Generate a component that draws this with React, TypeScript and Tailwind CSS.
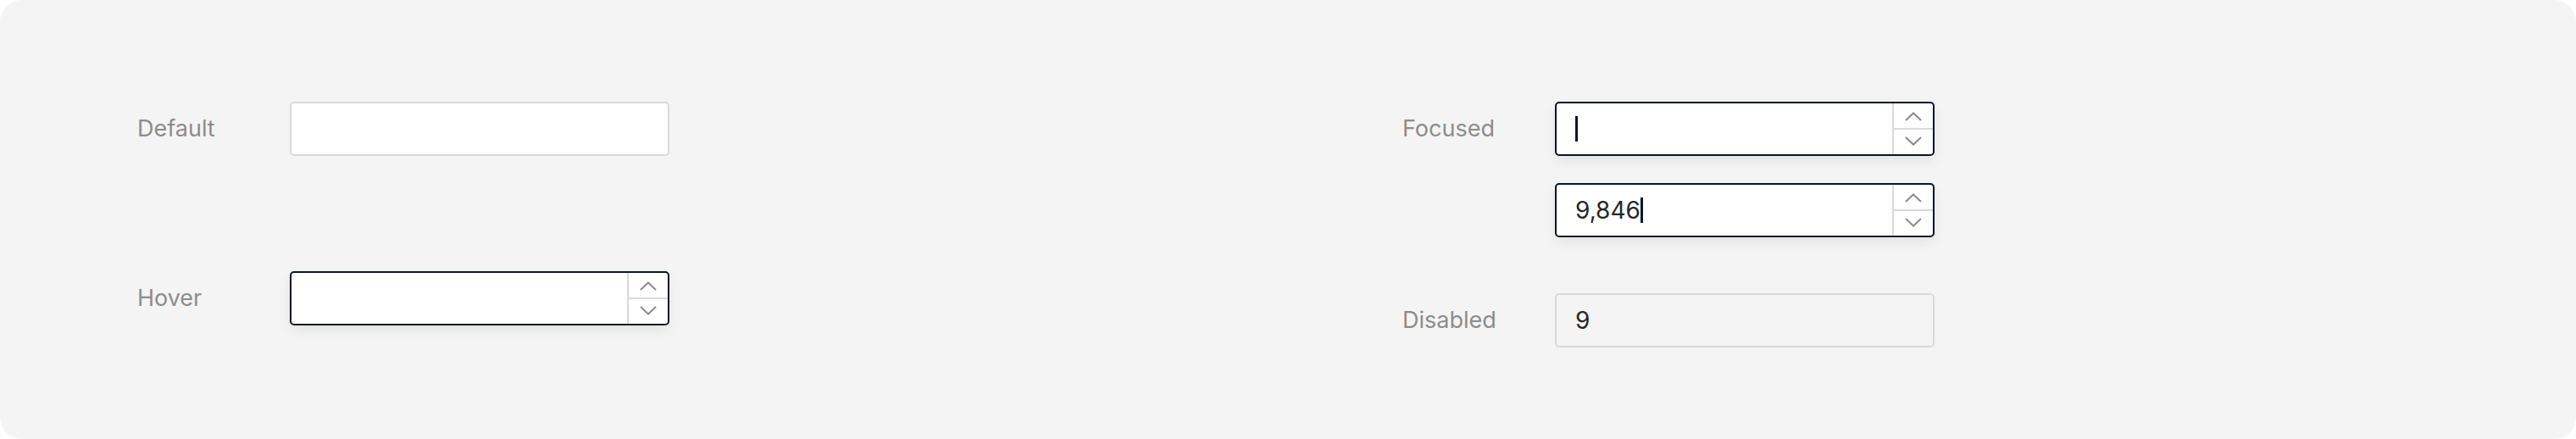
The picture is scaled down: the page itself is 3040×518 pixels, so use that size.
import type { ReactNode } from "react";

type Variant = "default" | "hover" | "focused" | "disabled";

function Chevron({ up }: { up?: boolean }) {
  return (
    <svg width="20" height="11" viewBox="0 0 20 11" fill="none">
      <path
        d={up ? "M1 10L10 1.5L19 10" : "M1 1L10 9.5L19 1"}
        stroke="#8c8c8c"
        strokeWidth="2"
      />
    </svg>
  );
}

function Caret() {
  return <span className="inline-block h-[30px] w-[3px] bg-[#0a1628]" />;
}

function NumberInput({ variant, value, caret }: { variant: Variant; value?: string; caret?: boolean }) {
  const active = variant === "hover" || variant === "focused";
  const box =
    variant === "disabled"
      ? "border-[#d9d9d9] bg-[#f4f4f4]"
      : active
        ? "border-[#0a1628] bg-white shadow-[0_6px_14px_rgba(0,0,0,0.07)]"
        : "border-[#d9d9d9] bg-white";

  return (
    <div className={`flex h-16 w-[448px] rounded-[5px] border-2 ${box}`}>
      <div className="flex flex-1 items-center pl-[22px] text-[28px] text-[#262626]">
        {value}
        {caret && <Caret />}
      </div>
      {active && (
        <div className="flex w-[48px] flex-col border-l-2 border-[#d9d9d9]">
          <div className="flex flex-1 items-center justify-center border-b-2 border-[#d9d9d9] pt-[2px]">
            <Chevron up />
          </div>
          <div className="flex flex-1 items-center justify-center pb-[2px]">
            <Chevron />
          </div>
        </div>
      )}
    </div>
  );
}

function Row({ label, children, className = "" }: { label: string; children: ReactNode; className?: string }) {
  return (
    <div className={`flex items-start ${className}`}>
      <div className="flex h-16 w-[180px] items-center text-[27px] text-[#8c8c8c]">{label}</div>
      <div className="flex flex-col gap-8">{children}</div>
    </div>
  );
}

export default function App() {
  return (
    <div className="h-[518px] w-[3040px] bg-white font-['Inter','Liberation_Sans',sans-serif]">
      <div className="grid h-full grid-cols-[1493px_auto] rounded-[26px] bg-[#f4f4f4] pl-[162px] pt-[120px]">
        <div className="flex flex-col">
          <Row label="Default">
            <NumberInput variant="default" />
          </Row>
          <Row label="Hover" className="mt-[136px]">
            <NumberInput variant="hover" />
          </Row>
        </div>
        <div className="flex flex-col">
          <Row label="Focused">
            <NumberInput variant="focused" caret />
            <NumberInput variant="focused" value="9,846" caret />
          </Row>
          <Row label="Disabled" className="mt-[66px]">
            <NumberInput variant="disabled" value="9" />
          </Row>
        </div>
      </div>
    </div>
  );
}
